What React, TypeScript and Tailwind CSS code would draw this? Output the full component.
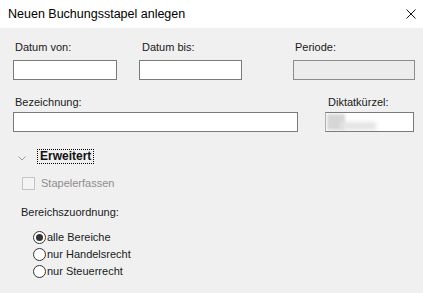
import React from "react";

const Label = ({ children, className = "" }: { children: React.ReactNode; className?: string }) => (
  <div className={`text-[11px] leading-[13px] text-[#1a1a1a] ${className}`}>{children}</div>
);

const Field = ({ className = "bg-white border-[#7a7a7a]", children }: { className?: string; children?: React.ReactNode }) => (
  <div className={`h-[20px] border relative overflow-hidden ${className}`}>{children}</div>
);

const Radio = ({ checked, label }: { checked?: boolean; label: string }) => (
  <div className="flex items-center h-[17px]">
    <span className="w-[13px] h-[13px] rounded-full border border-[#333] bg-white flex items-center justify-center mr-[1px]">
      {checked && <span className="w-[7px] h-[7px] rounded-full bg-[#333]" />}
    </span>
    <span className="text-[11px] leading-[13px] text-[#1a1a1a]">{label}</span>
  </div>
);

const App = () => {
  return (
    <div className="w-[423px] h-[293px] bg-[#f0f0f0] overflow-hidden" style={{ fontFamily: '"Liberation Sans", Arial, sans-serif' }}>
      {/* title bar */}
      <div className="h-[28px] bg-white flex items-center justify-between pl-[8px] pr-[7px]">
        <span className="text-[12.5px] text-black">Neuen Buchungsstapel anlegen</span>
        <svg width="10" height="10" viewBox="0 0 10 10" className="mb-[1px]">
          <path d="M0.5 0.5 L9.5 9.5 M9.5 0.5 L0.5 9.5" stroke="#111" strokeWidth="1" fill="none" />
        </svg>
      </div>

      <div className="pl-[13px] pt-[13px]">
        {/* row 1 */}
        <div className="flex">
          <div className="w-[104px]">
            <Label className="pl-[2px] mb-[6px]">Datum von:</Label>
            <Field />
          </div>
          <div className="w-[103px] ml-[22px]">
            <Label className="pl-[3px] mb-[6px]">Datum bis:</Label>
            <Field />
          </div>
          <div className="w-[122px] ml-[51px]">
            <Label className="pl-[2px] mb-[6px]">Periode:</Label>
            <Field className="bg-[#ececec] border-[#8c8c8c]" />
          </div>
        </div>

        {/* row 2 */}
        <div className="flex mt-[16px]">
          <div className="w-[285px]">
            <Label className="pl-[2px] mb-[3px]">Bezeichnung:</Label>
            <Field />
          </div>
          <div className="w-[89px] ml-[27px]">
            <Label className="pl-[3px] mb-[3px]">Diktatkürzel:</Label>
            <Field className="bg-white border-[#7a7a7a] border-l-[#b0b0b0]">
              <div className="absolute left-[1px] top-[1px] w-[18px] h-[16px] bg-[#d6d6d6] blur-[1.5px]" />
              <div className="absolute left-[14px] top-[9px] w-[36px] h-[8px] bg-[#e4e4e4] blur-[2px]" />
            </Field>
          </div>
        </div>

        {/* Erweitert */}
        <div className="flex items-center mt-[17px] h-[14px]">
          <svg width="8" height="5" viewBox="0 0 8 5" className="ml-[5px] mr-[11px] mt-[4px]">
            <path d="M0.5 0.5 L4 4 L7.5 0.5" stroke="#9a9a9a" strokeWidth="1" fill="none" />
          </svg>
          <span className="border border-dotted border-black px-[2px] text-[12px] leading-[13px] font-bold text-[#111]">
            Erweitert
          </span>
        </div>

        {/* Stapelerfassen */}
        <div className="flex items-center mt-[14px] ml-[9px]">
          <span className="w-[13px] h-[13px] border border-[#c4c4c4] bg-[#f4f4f4] mr-[6px]" />
          <span className="text-[11px] leading-[13px] text-[#8d8d8d]">Stapelerfassen</span>
        </div>

        {/* Bereichszuordnung */}
        <Label className="ml-[8px] mt-[16px]">Bereichszuordnung:</Label>
        <div className="ml-[20px] mt-[10px] flex flex-col">
          <Radio checked label="alle Bereiche" />
          <Radio label="nur Handelsrecht" />
          <Radio label="nur Steuerrecht" />
        </div>
      </div>
    </div>
  );
};

export default App;
